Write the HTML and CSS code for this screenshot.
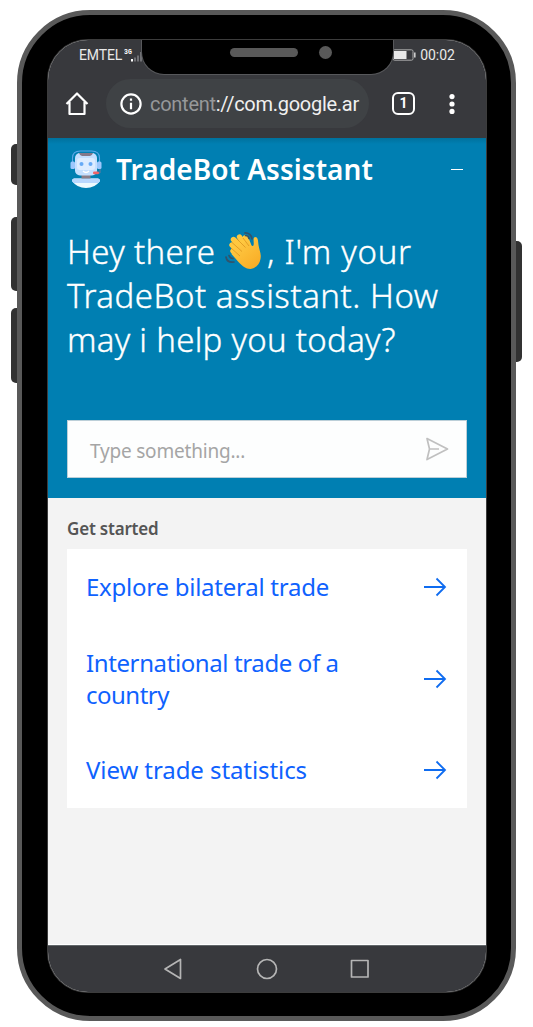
FILE: index.html
```html
<!DOCTYPE html>
<html lang="en">
<head>
<meta charset="utf-8">
<title>TradeBot Assistant</title>
<link rel="stylesheet" href="styles.css">
</head>
<body>
<div class="phone">
  <i class="key key-mute"></i><i class="key key-up"></i><i class="key key-down"></i><i class="key key-power"></i>
  <div class="screen">
    <div class="notch"><span class="speaker"></span><span class="camera"></span></div>
    <div class="status">
      <span class="carrier">EMTEL</span>
      <svg class="signal" width="19" height="16" viewBox="0 0 19 16"><text x="0" y="6.2" class="net" fill="#fff">3G</text><path d="M8 11v2.500" stroke="#fff" stroke-width="2"/><path d="M11 9.500v4M14 7.500v6M17 4v9.500" stroke="#707175" stroke-width="2"/></svg>
      <svg class="battery" width="24" height="12" viewBox="0 0 24 12"><rect x="1" y=".8" width="20" height="10.400" rx="1.500" fill="none" stroke="#aaa" stroke-width="1"/><rect x="2" y="2" width="12.500" height="8" fill="#e8e8e8"/><path d="M22.800 3.500v5" stroke="#ccc" stroke-width="1.600"/></svg>
      <span class="clock">00:02</span>
    </div>
    <div class="toolbar">
      <svg class="home" width="24" height="24" viewBox="0 0 24 24"><path d="M1.500 12 12 1.500 22.500 12M4.500 10v12h15V10" fill="none" stroke="#fff" stroke-width="2.200" stroke-linejoin="round"/></svg>
      <div class="address">
        <svg width="22" height="22" viewBox="0 0 22 22"><circle cx="11" cy="11" r="9.600" fill="none" stroke="#fff" stroke-width="2.200"/><path d="M11 5.600v2.200M11 9.800v6.400" stroke="#fff" stroke-width="2.200"/></svg>
        <span class="url"><span class="scheme">content</span>://com.google.ar</span>
      </div>
      <span class="tabs">1</span>
      <svg class="more" width="6" height="20" viewBox="0 0 6 20" fill="#fff"><circle cx="3" cy="2.600" r="2.600"/><circle cx="3" cy="10" r="2.600"/><circle cx="3" cy="17.400" r="2.600"/></svg>
    </div>
    <header class="hero">
      <div class="brand">
        <svg class="bot" width="34" height="38" viewBox="0 0 34 38">
          <path d="M3 31q0-2.500 2-2.500h24q2 0 2 2.500Q26 38 17 38T3 31Z" fill="#eefaff"/><path d="M3 31q0-2.500 2-2.500h24q2 0 2 2.500l-1.500 2h-25Z" fill="#b9d8ff"/>
          <path d="M12.500 25h9v3.500h-9Z" fill="#8c7e89"/>
          <rect x="6" y="3" width="22" height="22.500" rx="5" fill="#c4dfff"/><path d="M10 3h14q-1 3-3 3h-8q-2 0-3-3Z" fill="#85788a"/>
          <rect x="8" y="8" width="18" height="12" rx="3" fill="#ddecff"/>
          <circle cx="12.500" cy="14" r="2" fill="#67aaf6"/><circle cx="21.500" cy="14" r="2" fill="#67aaf6"/><path d="M14 21q3 3 6 0" fill="none" stroke="#fff" stroke-width="1.400"/>
          <path d="M3.500 13V8q0-7 8-7h11q8 0 8 7v5" fill="none" stroke="#5ca7e8" stroke-width="1.100"/>
          <rect x="1.500" y="11.500" width="4.500" height="7.500" rx="1.500" fill="#9dc7fc"/><rect x="28" y="11.500" width="4.500" height="7.500" rx="1.500" fill="#9dc7fc"/>
          <path d="M31 19v4H27" fill="none" stroke="#667b9c"/><rect x="24" y="21.500" width="6" height="2.800" rx="1.200" fill="#ef6468"/>
        </svg>
        <h1>TradeBot Assistant</h1>
        <span class="minimize"></span>
      </div>
      <div class="greeting">
        <div class="g1"><span class="hey">Hey there</span><svg class="wave" width="38" height="38" viewBox="0 0 38 38">
          <defs><linearGradient id="skin" x2=".8" y2="1"><stop stop-color="#ffd04b"/><stop offset="1" stop-color="#f9ac25"/></linearGradient></defs>
          <g fill="none" stroke="#ffc83f" stroke-width="5.400" stroke-linecap="round"><path d="m17 22-10-9M20 19 8.500 7.500M23 17 14.500 5M25 17 20.500 5.500M8 19l11 10"/></g>
          <path d="m9 17 14-9q2 6 5 6c2-2-1-8 2-9 3 0 3 3 3.500 8 1 6 3 9 2 14-1 6-5 9-10 10-5 0-8-3-12-7l-7-8Z" fill="url(#skin)"/>
          <path d="m6 16 9 8M7 10.500l10 9M11.500 6.500l9 9M18 6l6 8" fill="none" stroke="#dc941f" stroke-width=".8"/>
          <g fill="none" stroke="#31536b" stroke-width="1.700" stroke-linecap="round"><path d="M20 .9q6 0 7 6M20.500 3.500q3 0 3.500 3M1 25q1 6 8 5M4 23.500q1 3 4 3"/></g>
        </svg><span class="im">, I'm your</span></div>
        <div class="g2">TradeBot assistant. How</div>
        <div class="g3">may i help you today?</div>
      </div>
      <div class="field"><span class="hint">Type something...</span>
        <svg width="24" height="24" viewBox="0 0 24 24" fill="none" stroke="#c0c0c0" stroke-width="1.700" stroke-linejoin="round"><path d="M2 1.500 22.500 12 2 22.500 4.500 12ZM4.500 12H14"/></svg>
      </div>
    </header>
    <main class="start">
      <h2>Get started</h2>
      <div class="options">
        <a class="option"><span class="o1">Explore bilateral trade</span><svg width="24" height="20" viewBox="0 0 24 20"><path d="M1 10h21M13.500 1.500 22 10l-8.500 8.500"/></svg></a>
        <a class="option tall"><span><span class="o2">International trade of a</span><br><span class="o3">country</span></span><svg width="24" height="20" viewBox="0 0 24 20"><path d="M1 10h21M13.500 1.500 22 10l-8.500 8.500"/></svg></a>
        <a class="option"><span class="o4">View trade statistics</span><svg width="24" height="20" viewBox="0 0 24 20"><path d="M1 10h21M13.500 1.500 22 10l-8.500 8.500"/></svg></a>
      </div>
    </main>
    <nav class="navbar">
      <svg width="20" height="22" viewBox="0 0 20 22"><path d="M17.500 1.500v19L2 11Z"/></svg>
      <svg width="22" height="22" viewBox="0 0 22 22"><circle cx="11" cy="11" r="9.500"/></svg>
      <svg width="20" height="20" viewBox="0 0 20 20"><rect x="1.500" y="1.500" width="16.500" height="16.500"/></svg>
    </nav>
  </div>
</div>
</body>
</html>
```
FILE: styles.css
```css
* { box-sizing: border-box; }
body { margin: 0; height: 1027px; overflow: hidden; padding: 10px 0 0 17px; background: #fff; font-family: "Noto Sans", sans-serif; }
h1, h2 { margin: 0; }
svg { flex: none; display: block; }
.phone { position: relative; width: 499px; height: 1011px; padding: 25px 25px 24px 26px; border: 5px solid #595959; border-radius: 73px; background: #000; }
.key { position: absolute; z-index: -1; width: 12px; background: #323232; border-radius: 5px; left: -11px; }
.key-mute { top: 129px; height: 41px; }
.key-up { top: 202px; height: 74px; }
.key-down { top: 293px; height: 75px; }
.key-power { left: auto; right: -11px; top: 226px; height: 121px; }
.screen { position: relative; width: 438px; height: 952px; border-radius: 40px; overflow: hidden; background: #f3f3f3; display: flex; flex-direction: column; box-shadow: 0 0 0 1px #3c3c3c; }
.notch { position: absolute; left: 94px; top: 0; width: 251px; height: 34px; background: #000; border-radius: 0 0 22px 22px; box-shadow: 0 0 0 1px #57585b; }
.speaker { position: absolute; left: 88px; top: 8px; width: 68px; height: 9px; border-radius: 5px; background: #595959; }
.camera { position: absolute; left: 177px; top: 6px; width: 13px; height: 13px; border-radius: 50%; background: #595959; }
.status { height: 34px; flex: none; background: #38393d; display: flex; padding: 7px 31px 0 31px; font: 14px/17px Roboto, sans-serif; color: #e8e8e8; }
.carrier { width: 45px; letter-spacing: -.15px; }
.signal { margin-top: 1px; }
.net { font: bold 6.500px "Liberation Mono", monospace; }
.battery { margin: 2px 4px 0 auto; }
.toolbar { height: 64px; flex: none; background: #38393d; display: flex; align-items: center; padding: 5px 31px 9px 17px; }
.address { width: 263px; height: 49px; border-radius: 25px; margin-left: 17px; background: #3f4245; display: flex; align-items: center; padding-left: 14px; gap: 8px; font: 20px Roboto, sans-serif; color: #f0f0f0; }
.toolbar { padding: 0 31px 5px 17px; }
.scheme { color: #96989a; }
.url { white-space: nowrap; letter-spacing: -.27px; padding-top: 1px; }
.tabs { margin-left: 23px; width: 23px; height: 23px; border: 2px solid #fff; border-radius: 6px; color: #fff; font: bold 14px/19px Roboto, sans-serif; text-align: center; }
.more { margin-left: auto; }
.hero { height: 360px; flex: none; background: linear-gradient(#00719d, #007fb2 6px); padding: 12px 20px 0 19px; color: #fff; }
.brand { display: flex; align-items: flex-start; height: 80px; }
.bot { margin-left: 2px; }
h1 { margin-left: 13px; font-size: 28px; line-height: 38px; font-weight: 600; white-space: nowrap; letter-spacing: .05px; }
.minimize { margin: 18.500px 3px 0 auto; width: 12px; height: 1.500px; background: #fff; }
.greeting { height: 190px; font-size: 33px; line-height: 44px; font-weight: 300; white-space: nowrap; -webkit-text-stroke: .35px #fff; }
.greeting > div { height: 44px; }
.greeting .g1 { display: flex; }
.hey { width: 158px; letter-spacing: .35px; }
.wave { margin: 2px 4px 0 0; -webkit-text-stroke: 0; }
.im { letter-spacing: .72px; }
.g2 { letter-spacing: .54px; }
.g3 { letter-spacing: .28px; }
.field { height: 58px; width: 400px; background: #fdfefe; border: 1px solid #bccfd8; display: flex; align-items: center; justify-content: space-between; padding: 0 17px 0 22px; font-size: 19px; color: #a5a5a5; }
.hint { letter-spacing: -.2px; padding-top: 3px; }
.start { padding: 17px 20px 0 19px; flex: 1; border-bottom: 1px solid #fff; }
h2 { font-size: 17px; line-height: 27px; font-weight: 600; color: #555; letter-spacing: -.2px; }
.options { margin-top: 7px; width: 400px; height: 259px; background: #fff; color: #0f62fe; font-size: 24px; line-height: 32px; white-space: nowrap; }
.option { height: 76px; padding: 0 20px 0 19px; display: flex; align-items: center; justify-content: space-between; }
.o1 { letter-spacing: -.25px; }
.o2 { letter-spacing: -.39px; }
.o3 { letter-spacing: -.5px; }
.o4 { letter-spacing: -.08px; }
.tall { height: 107px; }
.option svg { fill: none; stroke: #0f6cf0; stroke-width: 1.800; }
.navbar { height: 47px; flex: none; background: #38393d; border-top: 1px solid #62676a; display: flex; align-items: center; padding: 0 0 0 115px; }
.navbar svg { fill: none; stroke: #b5b5b5; stroke-width: 1.700; stroke-linejoin: round; }
.navbar svg + svg { margin-left: 72.500px; }
```
